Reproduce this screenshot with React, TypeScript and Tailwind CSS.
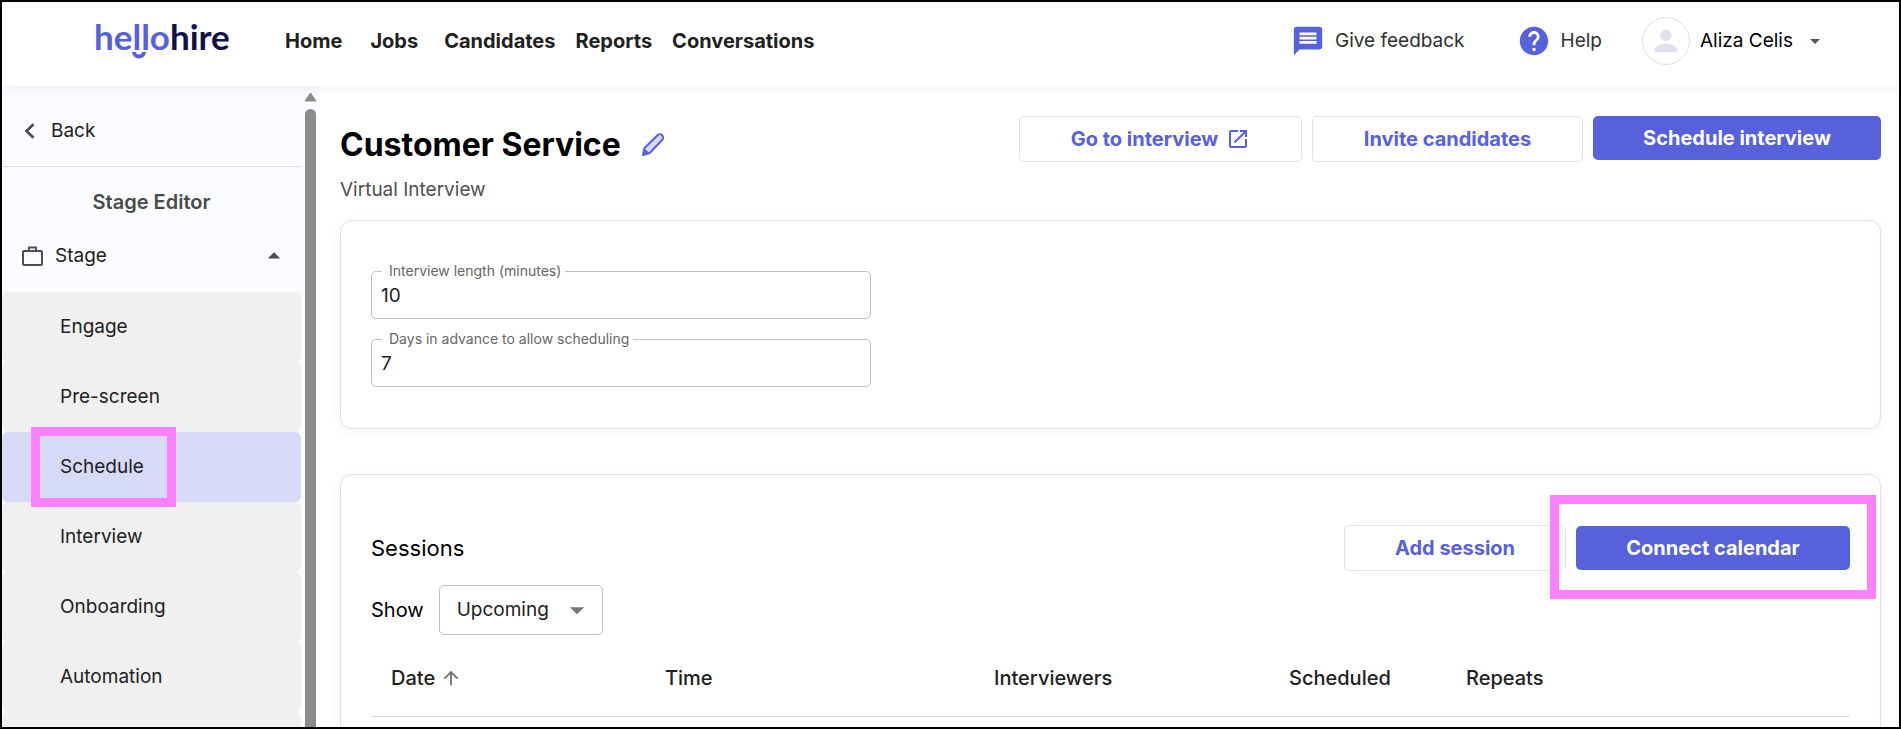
import type { ReactNode } from 'react'
import { MdArrowDropDown, MdArrowDropUp, MdArrowUpward, MdHelp, MdMessage, MdOpenInNew, MdPerson } from 'react-icons/md'
import { clsx } from 'clsx'

const NAV = [
  { label: 'Home', gap: 'mr-7' },
  { label: 'Jobs', gap: 'mr-[26px]' },
  { label: 'Candidates', gap: 'mr-5' },
  { label: 'Reports', gap: 'mr-5' },
  { label: 'Conversations', gap: '' },
]

const STAGES = ['Engage', 'Pre-screen', 'Schedule', 'Interview', 'Onboarding', 'Automation']

const COLUMNS = [
  { label: 'Date', width: 'w-[274px]', sorted: true },
  { label: 'Time', width: 'w-[329px]' },
  { label: 'Interviewers', width: 'w-[295px]' },
  { label: 'Scheduled', width: 'w-[177px]' },
  { label: 'Repeats', width: '' },
]

function Logo() {
  return (
    <a href="#" aria-label="hellohire" className="relative block font-[Lato,sans-serif] text-[35px] leading-9 font-bold">
      <span className="text-[#5661db]">hello</span>
      <span className="text-[#10104a]">hire</span>
      <svg className="absolute left-[38px] top-[34px]" width="14" height="7" viewBox="0 0 14 7" aria-hidden="true">
        <path d="M0 0h4a3 2.5 0 0 0 6 0h4a7 6.5 0 0 1-14 0z" fill="#5661db" />
      </svg>
    </a>
  )
}

function Header() {
  return (
    <header className="relative z-10 flex h-[84px] shrink-0 items-start bg-white pl-[92px] pr-[72px] shadow-[0_2px_12px_rgba(0,0,0,0.06)]">
      <div className="mt-4 w-[191px]">
        <Logo />
      </div>
      <nav className="mt-[23px] flex text-xl leading-8 font-bold text-[#212121]">
        {NAV.map((item) => (
          <a key={item.label} href="#" className={item.gap}>
            {item.label}
          </a>
        ))}
      </nav>
      <div className="ml-auto mt-[15px] flex items-center text-[19px]">
        <a href="#" className="mr-[52px] flex items-center gap-[10px] text-[#303030]">
          <MdMessage className="size-[34px] text-[#5661db]" />
          Give feedback
        </a>
        <a href="#" className="mr-10 flex items-center gap-[10px] text-[#303030]">
          <MdHelp className="size-[34px] text-[#5661db]" />
          Help
        </a>
        <button type="button" className="flex items-center gap-[10px] text-black">
          <span className="flex size-12 items-center justify-center rounded-full border border-[#e0e0ef]">
            <MdPerson className="size-[34px] text-[#dfe1ec]" />
          </span>
          Aliza Celis
          <MdArrowDropDown className="size-6 text-[#555]" />
        </button>
      </div>
    </header>
  )
}

function Sidebar() {
  return (
    <aside className="flex w-[318px] shrink-0 bg-[#fbfcff] text-[19px] text-[#212121]">
      <div className="w-[299px] shrink-0">
        <a href="#" className="flex h-[81px] items-center gap-4 border-b border-[#dcdce2] pl-[22px] pt-[10px]">
          <svg width="11" height="16" viewBox="0 0 11 16" fill="none" stroke="#4a4a4a" strokeWidth="2.6" aria-hidden="true">
            <path d="M9.5 1.2 2.5 8l7 6.8" />
          </svg>
          Back
        </a>
        <h2 className="pt-[19px] text-center text-xl leading-8 font-semibold text-[#4a4a4a]">Stage Editor</h2>
        <button type="button" className="flex h-[74px] w-full items-center gap-3 pl-5 pr-3 pt-[2px]">
          <svg width="21" height="20" viewBox="0 0 21 20" fill="none" stroke="#4f4f4f" strokeWidth="2" aria-hidden="true">
            <rect x="1" y="5" width="19" height="14" rx="1" />
            <path d="M7 5V1.5h7V5" />
          </svg>
          Stage
          <MdArrowDropUp className="ml-auto size-[30px] text-[#4a4a4a]" />
        </button>
        <ul>
          {STAGES.map((stage) => (
            <li key={stage} className="relative">
              <a
                href="#"
                className={clsx(
                  'flex h-[70px] items-center rounded-md pl-[58px]',
                  stage === 'Schedule' ? 'bg-[#d7daf7]' : 'bg-[#f0f0f0]',
                )}
              >
                {stage}
              </a>
              {stage === 'Schedule' && (
                <span className="pointer-events-none absolute -top-[5px] left-[29px] z-10 h-20 w-[145px] border-[9px] border-[#ff80ff]" />
              )}
            </li>
          ))}
          <li className="h-[70px] rounded-md bg-[#f0f0f0]" aria-hidden="true" />
        </ul>
      </div>
      {/* Scrollbar */}
      <div className="flex flex-1 flex-col items-center pt-[6px] pr-[1px]" aria-hidden="true">
        <svg width="13" height="10" viewBox="0 0 13 10">
          <path d="M6.5 1 12 9H1z" fill="#8b8b8b" stroke="#8b8b8b" strokeLinejoin="round" />
        </svg>
        <div className="mt-[7px] w-[11px] flex-1 rounded-t-full bg-[#8b8b8b]" />
      </div>
    </aside>
  )
}

function Button({ children, primary, className }: { children: ReactNode; primary?: boolean; className?: string }) {
  return (
    <button
      type="button"
      className={clsx(
        'flex items-center justify-center gap-2 rounded-[5px] text-xl font-bold',
        primary ? 'h-11 bg-[#5661db] text-white' : 'h-[46px] border border-[#e0e0f0] bg-white text-[#5661db]',
        className,
      )}
    >
      {children}
    </button>
  )
}

function Field({ id, label, value }: { id: string; label: string; value: string }) {
  return (
    <div className="relative w-[500px]">
      <input
        id={id}
        defaultValue={value}
        className="block h-12 w-full rounded-[5px] border border-[#c0c0c0] bg-transparent px-[9px] text-[19px] text-[#212121] outline-none"
      />
      <label htmlFor={id} className="absolute -top-[10px] left-[11px] bg-white pl-[7px] pr-1 text-sm leading-5 text-[#666]">
        {label}
      </label>
    </div>
  )
}

export default function App() {
  return (
    <div className="flex h-screen flex-col overflow-hidden border-2 border-black bg-white font-[Inter,sans-serif] text-xl text-black">
      <Header />
      <div className="flex min-h-0 flex-1 overflow-hidden">
        <Sidebar />
        <main className="min-w-0 flex-1 overflow-hidden pl-5 pr-[18px] pt-[30px]">
          <div className="flex items-start justify-between">
            <div>
              <h1 className="flex h-[58px] items-center gap-5 text-[32px] font-bold">
                Customer Service
                <button type="button" aria-label="Edit name">
                  <svg width="24" height="24" viewBox="0 0 24 24" aria-hidden="true">
                    <path
                      d="M2 22l1.5-7L16.500 2.300a3.200 3.200 0 0 1 4.800 4.500L8.800 20z"
                      fill="#d7daf7"
                      stroke="#5661db"
                      strokeWidth="2"
                      strokeLinejoin="round"
                    />
                    <path d="M3.500 15.500l5 4.500L2 22z" fill="#5661db" />
                  </svg>
                </button>
              </h1>
              <p className="text-[19px] leading-8 text-[#4f4f4f]">Virtual Interview</p>
            </div>
            <div className="flex items-start gap-[10px]">
              <Button className="w-[283px]">
                Go to interview
                <MdOpenInNew className="size-6" />
              </Button>
              <Button className="w-[271px]">Invite candidates</Button>
              <Button primary className="w-72">
                Schedule interview
              </Button>
            </div>
          </div>

          <section className="mt-[14px] flex h-[209px] flex-col gap-5 rounded-xl border border-[#e0e0f0] bg-white px-[30px] pt-[50px] shadow-[0_2px_12px_rgba(0,0,0,0.05)]">
            <Field id="length" label="Interview length (minutes)" value="10" />
            <Field id="days" label="Days in advance to allow scheduling" value="7" />
          </section>

          <section className="mt-[45px] h-[400px] rounded-xl border border-[#e0e0f0] bg-white px-[30px] pt-[50px] shadow-[0_2px_12px_rgba(0,0,0,0.05)]">
            <div className="flex items-center justify-between">
              <h2 className="text-[22px]">Sessions</h2>
              <div className="flex items-center gap-[10px]">
                <Button className="w-[222px]">Add session</Button>
                <div className="relative">
                  <Button primary className="w-[274px]">
                    Connect calendar
                  </Button>
                  <span className="pointer-events-none absolute -inset-x-[26px] -top-[31px] h-[104px] border-[9px] border-[#ff80ff]" />
                </div>
              </div>
            </div>
            <div className="mt-[14px] flex items-center gap-[15px]">
              <label htmlFor="show">Show</label>
              <div className="relative">
                <select
                  id="show"
                  className="block h-[50px] w-[164px] appearance-none rounded-[5px] border border-[#c0c0c0] bg-white pl-[17px] text-[19px] text-[#212121]"
                >
                  <option>Upcoming</option>
                </select>
                <MdArrowDropDown className="pointer-events-none absolute right-[9px] top-2 size-[34px] text-[#757575]" />
              </div>
            </div>
            <table className="mt-[5px] w-full table-fixed">
              <thead>
                <tr className="h-[76px] border-b border-[#dcdce0]">
                  {COLUMNS.map((col) => (
                    <th key={col.label} className={clsx('px-5 text-left font-medium text-[#212121]', col.width)}>
                      <span className="flex items-center gap-[5px]">
                        {col.label}
                        {col.sorted && <MdArrowUpward className="size-[22px] text-[#757575]" />}
                      </span>
                    </th>
                  ))}
                </tr>
              </thead>
            </table>
          </section>
        </main>
      </div>
    </div>
  )
}
